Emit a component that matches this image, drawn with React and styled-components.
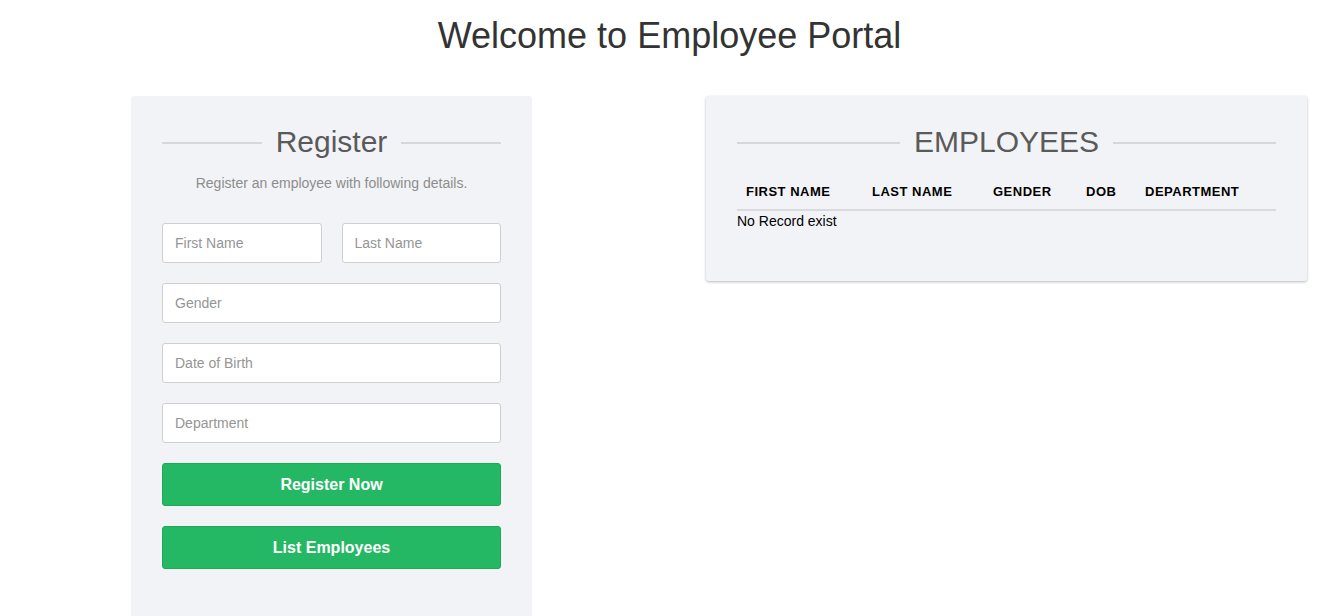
import styled, { createGlobalStyle } from 'styled-components';

const GlobalStyle = createGlobalStyle`
  body {
    margin: 0;
    background: #fff;
    font-family: "Liberation Sans", Arial, sans-serif;
  }
`;

const Page = styled.div`
  width: 1328px;
  height: 616px;
  overflow: hidden;
`;

const Title = styled.h1`
  margin: 0;
  padding-top: 14px;
  text-align: center;
  font-size: 36px;
  font-weight: 400;
  line-height: 44px;
  color: #333;
  padding-left: 11px;
`;

const Columns = styled.div`
  display: flex;
  align-items: flex-start;
  gap: 174px;
  padding: 38px 0 0 131px;
`;

const Card = styled.div`
  width: ${(p) => p.$width}px;
  min-height: ${(p) => p.$minHeight || 0}px;
  box-sizing: border-box;
  padding: 24px 31px ${(p) => p.$bottom || 0}px;
  background: #f2f3f6;
  border-radius: 3px;
  box-shadow: ${(p) => (p.$shadow ? '0 1px 3px rgba(0,0,0,0.28)' : 'none')};
`;

const Heading = styled.div`
  display: flex;
  align-items: center;
  gap: 14px;
  font-size: 30px;
  line-height: 44px;
  color: #5a5a5a;
  &::before,
  &::after {
    content: '';
    flex: 1;
    height: 2px;
    background: #d6d7d9;
    margin-top: 2px;
  }
`;

const Subtitle = styled.p`
  margin: 10px 0 31px;
  text-align: center;
  font-size: 14px;
  line-height: 18px;
  color: #8d8d8d;
`;

const Form = styled.div`
  display: flex;
  flex-direction: column;
  gap: 20px;
`;

const Row = styled.div`
  display: grid;
  grid-template-columns: 1fr 1fr;
  gap: 20px;
`;

const Input = styled.input`
  width: 100%;
  height: 40px;
  box-sizing: border-box;
  padding: 0 12px;
  border: 1px solid #cfcfcf;
  border-radius: 3px;
  background: #fff;
  font-family: inherit;
  font-size: 14px;
  &::placeholder {
    color: #959595;
  }
`;

const Button = styled.button`
  height: 43px;
  border: 1px solid #1ea958;
  border-radius: 3px;
  background: #24b864;
  color: #fff;
  font-family: inherit;
  font-size: 16px;
  font-weight: 700;
  cursor: pointer;
`;

const Table = styled.table`
  width: 100%;
  margin-top: 14px;
  border-collapse: collapse;
  table-layout: fixed;
  font-size: 13px;
  color: #000;
`;

const Th = styled.th`
  width: ${(p) => (p.$width ? `${p.$width}px` : 'auto')};
  padding: 6px 9px 10px;
  text-align: left;
  font-weight: 700;
  letter-spacing: 0.5px;
  text-transform: uppercase;
  border-bottom: 2px solid #d9dadc;
  white-space: nowrap;
`;

const Empty = styled.div`
  margin-top: 2px;
  font-size: 14px;
  color: #000;
`;

const columns = [
  { label: 'First Name', width: 108 },
  { label: 'Last Name', width: 103 },
  { label: 'Gender', width: 75 },
  { label: 'DOB', width: 41 },
  { label: 'Department' },
];

function App() {
  return (
    <Page>
      <GlobalStyle />
      <Title>Welcome to Employee Portal</Title>
      <Columns>
        <Card $width={401} $minHeight={560}>
          <Heading>Register</Heading>
          <Subtitle>Register an employee with following details.</Subtitle>
          <Form>
            <Row>
              <Input placeholder="First Name" />
              <Input placeholder="Last Name" />
            </Row>
            <Input placeholder="Gender" />
            <Input placeholder="Date of Birth" />
            <Input placeholder="Department" />
            <Button>Register Now</Button>
            <Button>List Employees</Button>
          </Form>
        </Card>
        <Card $width={601} $bottom={52} $shadow>
          <Heading>EMPLOYEES</Heading>
          <Table>
            <thead>
              <tr>
                {columns.map((c) => (
                  <Th key={c.label} $width={c.width}>
                    {c.label}
                  </Th>
                ))}
              </tr>
            </thead>
          </Table>
          <Empty>No Record exist</Empty>
        </Card>
      </Columns>
    </Page>
  );
}

export default App;
